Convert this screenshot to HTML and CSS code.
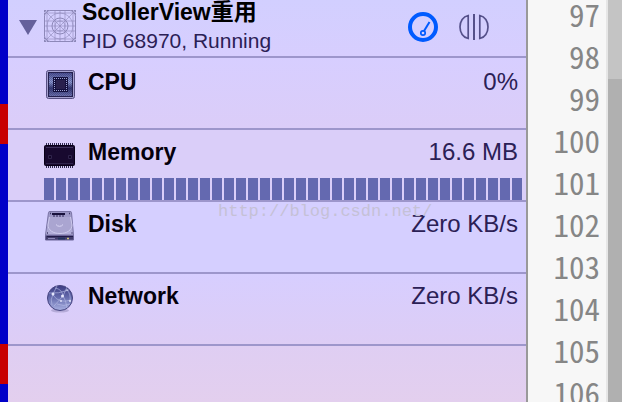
FILE: index.html
```html
<!DOCTYPE html>
<html lang="en">
<head>
<meta charset="utf-8">
<title>Debug navigator</title>
<link rel="stylesheet" href="styles.css">
</head>
<body>
<div class="window">
  <div class="edge"></div>
  <main class="panel">
    <header class="process">
      <button class="plain" aria-label="Collapse process"><svg width="18" height="16" viewBox="0 0 18 16"><path d="M0 0H18L9 15Z" fill="#65609b"/></svg></button>
      <svg class="app-icon" width="32" height="32" viewBox="0 0 32 32" fill="none" stroke="#8d88b8" stroke-width=".6">
        <rect x=".5" y=".5" width="31" height="31" rx="6" stroke-width="1"/>
        <path d="M0 .5H32M0 31.5H32M.5 0V32M31.5 0V32" stroke-width="1" stroke-dasharray="2 1"/>
        <circle cx="16" cy="16" r="13"/><circle cx="16" cy="16" r="8" stroke-width="1"/><circle cx="16" cy="16" r="5"/>
        <path d="M0 0L32 32M32 0L0 32M16 0V32M0 16H32M11 0V32M21 0V32M0 11H32M0 21H32M3 0V32M29 0V32M0 3H32M0 29H32"/>
      </svg>
      <div class="process-text">
        <h1 class="title">ScollerView重用</h1>
        <p class="status">PID 68970, Running</p>
      </div>
      <div class="tools">
        <button class="plain" aria-label="Show gauges"><svg width="30" height="30" viewBox="0 0 30 30" fill="none" stroke="#005bff"><circle cx="15" cy="15" r="13" stroke-width="4"/><circle cx="15" cy="21" r="2.2" stroke-width="1.7"/><path d="M16 19L21.5 10" stroke-width="2"/></svg></button>
        <button class="plain" aria-label="View options"><svg width="30" height="26" viewBox="0 0 30 26" fill="none" stroke="#55508a" stroke-width="1.7"><path d="M9.2 1.5V24.5C4 23.5 1 18.5 1 13S4 2.5 9.2 1.5ZM20.8 1.5V24.5C26 23.5 29 18.5 29 13S26 2.5 20.8 1.5Z"/><path d="M15 0V26" stroke-width="2"/></svg></button>
      </div>
    </header>

    <section class="gauge cpu">
      <div class="line">
        <svg class="icon" width="32" height="32" viewBox="0 0 32 32">
          <defs>
            <linearGradient id="chip" x2="0" y2="1"><stop offset="0" stop-color="#494d91"/><stop offset=".4" stop-color="#8e9bd2"/><stop offset=".65" stop-color="#343872"/><stop offset="1" stop-color="#7379b5"/></linearGradient>
            <pattern id="weave" width="2" height="2" patternUnits="userSpaceOnUse"><path d="M0 0h1v1H0zM1 1h1v1H1z" fill="#211e58" opacity=".3"/></pattern>
          </defs>
          <rect x="2.5" y="2.5" width="28" height="28" rx="2" fill="#a5a0cf" stroke="#575083"/>
          <rect x="4.5" y="4.5" width="24" height="24" fill="url(#chip)" stroke="#24204f"/>
          <rect x="5" y="5" width="23" height="23" fill="url(#weave)"/>
          <rect x="9" y="9" width="15" height="15" fill="#14103e"/>
          <path d="M10 10.5H23M10 22.5H23M10.5 10V23M22.5 10V23" stroke="#9da2d2" stroke-dasharray="1 1"/>
          <rect x="12" y="12" width="9" height="9" fill="#29204d"/>
        </svg>
        <h2 class="name">CPU</h2><span class="value">0%</span>
      </div>
    </section>

    <section class="gauge memory">
      <div class="line">
        <svg class="icon" width="32" height="32" viewBox="0 0 32 32">
          <path d="M2 6.5H30M2 28.5H30" stroke="#302950" stroke-width="3" stroke-dasharray="1 1"/>
          <rect x=".5" y="7.5" width="30" height="20" rx="1" fill="#18092f" stroke="#080018"/>
          <path d="M2 9.5H29" stroke="#3d315a"/><path d="M2 25.5H29" stroke="#2f244b"/>
          <path d="M4.5 17.5h3v3h-3zM24.5 17.5h3v3h-3z" fill="#110426" stroke="#30244c"/>
        </svg>
        <h2 class="name">Memory</h2><span class="value">16.6 MB</span>
      </div>
      <div class="history">
        <i></i><i></i><i></i><i></i><i></i><i></i><i></i><i></i><i></i><i></i><i></i><i></i><i></i><i></i><i></i><i></i><i></i><i></i><i></i><i></i><i></i><i></i><i></i><i></i><i></i><i></i><i></i><i></i><i></i><i></i><i></i><i></i><i></i><i></i><i></i><i></i><i></i><i></i><i></i><i></i>
      </div>
    </section>

    <section class="gauge disk">
      <div class="line">
        <svg class="icon" width="32" height="32" viewBox="0 0 32 32">
          <defs><linearGradient id="drive" x2="0" y2="1"><stop offset="0" stop-color="#9994c4"/><stop offset="1" stop-color="#b3aeda"/></linearGradient></defs>
          <path d="M4.5 2.5Q4.5 1.5 6 1.5H26Q27.5 1.5 27.5 2.5L29.5 25H1.5Z" fill="url(#drive)" stroke="#7a74a5"/>
          <path d="M5.5 7L4 15C4 20 9 23.5 16 23.5S28 20 28 15L26.5 7" fill="#aaa5d1" stroke="#cdc9ec"/>
          <path d="M6 3.5h1M25 3.5h1M3 23h1M27.5 23h1" stroke="#3d3666" stroke-width="1.5"/>
          <path d="M8 3H21V5H8Z" fill="#18113c"/><path d="M9 6H20" stroke="#302954" stroke-dasharray="2 1"/>
          <path d="M12 14.5A4 3.5 0 0 0 19 14.5" fill="none" stroke="#dad6f5"/>
          <path d="M1.5 25.5H29.5V30H1.5Z" fill="#433d6d" stroke="#6b6498"/>
          <path d="M3 26.5H29" stroke="#211a49"/><path d="M4 28.5H11" stroke="#8c86b8"/><path d="M14 28.5H21" stroke="#25345f" stroke-width="2"/><path d="M23 28.5H25" stroke="#cec57c" stroke-width="1.5"/>
        </svg>
        <h2 class="name">Disk</h2><span class="value">Zero KB/s</span>
      </div>
      <div class="watermark">http://blog.csdn.net/</div>
    </section>

    <section class="gauge network">
      <div class="line">
        <svg class="icon" width="32" height="32" viewBox="0 0 32 32">
          <defs><linearGradient id="globe" x2="0" y2="1"><stop offset="0" stop-color="#3c3b82"/><stop offset=".45" stop-color="#6268aa"/><stop offset="1" stop-color="#a9b0e2"/></linearGradient></defs>
          <ellipse cx="16" cy="28.5" rx="9" ry="2" fill="#b5abd8"/>
          <circle cx="16" cy="16" r="12.5" fill="url(#globe)" stroke="#45437f"/>
          <path d="M5 11Q14 12 25 8M9 13Q15 22 27 18M19 14L10 24M19 14L23 5M19 14Q22 18 23 26M9 12L13 4M9 12Q6 18 8 23M13 22Q20 25 26 22M23 8Q27 12 26 19M11 6Q18 7 19 14" fill="none" stroke="#b9bee8" stroke-width=".6"/>
          <g fill="#e4e6fc"><circle cx="9" cy="12" r="1.5"/><circle cx="18.5" cy="14" r="1.5"/><circle cx="23" cy="8" r=".8"/><circle cx="17" cy="19" r=".9"/><circle cx="26" cy="19" r="1"/></g>
        </svg>
        <h2 class="name">Network</h2><span class="value">Zero KB/s</span>
      </div>
    </section>
  </main>
  <aside class="source">
    <ol class="numbers"><li>97</li><li>98</li><li>99</li><li>100</li><li>101</li><li>102</li><li>103</li><li>104</li><li>105</li><li>106</li></ol>
    <div class="scrollbar"></div>
  </aside>
</div>
</body>
</html>
```

FILE: styles.css
```css
* { box-sizing: border-box; }
body { margin: 0; background: #fff; font-family: "Liberation Sans", "Noto Sans CJK SC", sans-serif; }
h1, h2, p, ol { margin: 0; padding: 0; }
svg { display: block; flex: none; }

.window { display: grid; grid-template-columns: 8px 1fr 100px; height: 100vh; overflow: hidden; }
.edge {
  background: linear-gradient(#0000c8 104px, #c80000 104px 144px, #0000c8 144px 344px, #c80000 344px 384px, #0000c8 384px);
}
.panel { min-width: 0; background: linear-gradient(#dfcef3 346px, #e3cfee); }

.process {
  display: flex;
  height: 58px;
  padding: 0 37px 0 11px;
  border-bottom: 2px solid #9d96cb;
  background: linear-gradient(#d2cfff, #d7cefe);
}
.plain { padding: 0; border: 0; background: none; }
.process > .plain { align-self: flex-start; padding-top: 20px; }
.app-icon { margin: 10px 6px 0 7px; }
.title { font-size: 23px; line-height: 24px; font-weight: 700; color: #000; white-space: nowrap; }
.status { margin-top: 4px; font-size: 21px; line-height: 26px; color: #2b2055; white-space: nowrap; }
.tools { display: flex; align-items: center; align-self: flex-start; gap: 21px; height: 54px; margin-left: auto; }

.gauge {
  position: relative;
  display: flex;
  flex-direction: column;
  height: 72px;
  padding-top: 8px;
  border-bottom: 2px solid #9d96cb;
}
.cpu { padding-top: 10px; background: linear-gradient(#d7ceff, #dbcdf8); }
.memory { background: #dacef9; }
.disk { background: #d5cfff; }
.network { background: linear-gradient(#d7ceff, #ddcdf5); }
.line { display: flex; height: 32px; padding: 0 8px 0 36px; line-height: 28px; }
.name { margin-left: 12px; font-size: 23px; font-weight: 700; color: #05000c; }
.value { margin-left: auto; font-size: 24px; color: #2b2055; }
.history { display: flex; gap: 2px; height: 22px; margin: auto 4px 0 36px; }
.history i { flex: 1; background: #6469b0; }
.watermark {
  position: absolute;
  top: 0;
  left: 210px;
  font: 17px/20px "Liberation Mono", monospace;
  color: #c5c1d6;
}

.source { display: flex; padding-right: 4px; border-left: 2px solid #999; overflow: hidden; }
.numbers {
  flex: 1;
  padding-right: 6px;
  border-right: 2px solid #e6e6e6;
  background: #f7f7f7;
  list-style: none;
  text-align: right;
  font: 400 31px/42px "Noto Sans Mono CJK SC", "Noto Sans CJK SC", "Noto Sans", sans-serif;
  color: #868686;
}
.numbers li { height: 42px; }
.numbers li:first-child { margin-top: -7px; }
.scrollbar { width: 14px; background: linear-gradient(#c4c4c4 79px, #b0b0b0 79px); }
```
